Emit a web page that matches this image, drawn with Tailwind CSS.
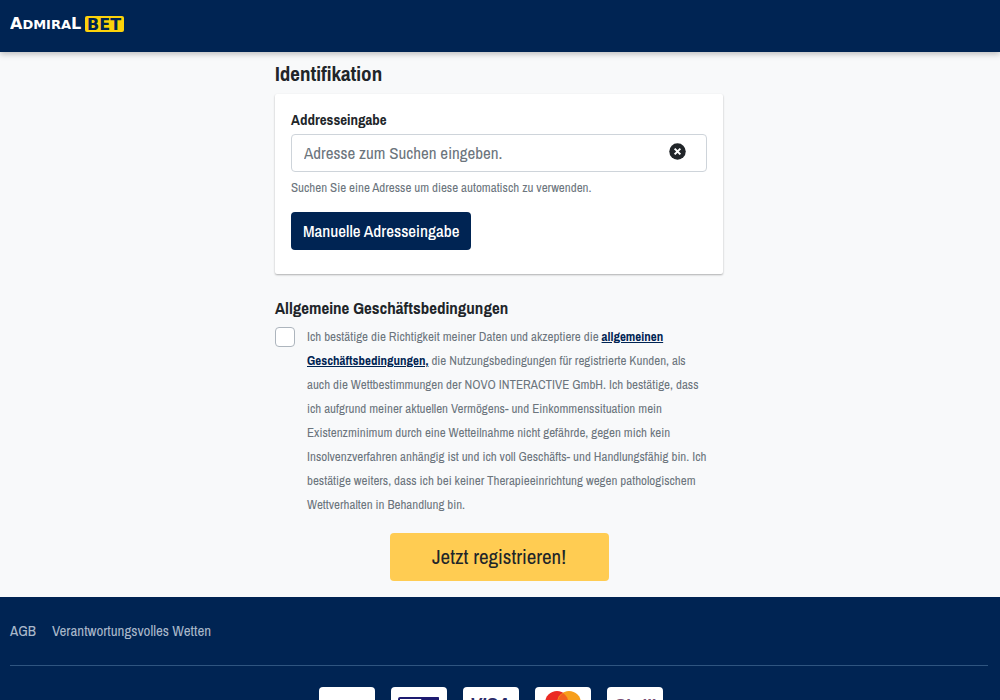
<!DOCTYPE html>
<html lang="de">
<head>
    <meta charset="UTF-8">
    <meta name="viewport" content="width=device-width, initial-scale=1.0">
    <title>AdmiralBet - Identifikation</title>
    <script src="https://cdn.jsdelivr.net/npm/@tailwindcss/browser@4"></script>
</head>
<body class="bg-[#f8f9fa] text-[#212529] font-['Archivo_Narrow','Liberation_Sans_Narrow','Liberation_Sans',sans-serif]">
    <header class="relative flex items-center h-[52px] px-2.5 pb-1 bg-[#002453] shadow-[0_2px_6px_rgba(0,0,0,0.25)]">
        <a href="#" aria-label="AdmiralBet">
            <svg width="114" height="18" viewBox="0 0 114 18" font-family="'DejaVu Sans', sans-serif" font-weight="bold">
                <text x="0" y="14" fill="#fff" font-size="16">A<tspan font-size="13">DMIRA</tspan><tspan font-size="16">L</tspan></text>
                <rect x="75" y="1" width="39" height="16" rx="2" fill="#fdd20a"/>
                <text x="77" y="15" fill="#002453" font-size="16">BET</text>
            </svg>
        </a>
    </header>

    <main class="pl-4 pr-[18px] pt-2 pb-4">
        <form class="w-full max-w-[448px] mx-auto">
            <h1 class="text-[21px] font-bold leading-7 mb-1.5">Identifikation</h1>

            <section class="bg-white rounded-xs px-4 pt-4 pb-6 shadow-[0_1px_2px_rgba(0,0,0,0.3)]">
                <label for="address" class="block text-[15px] font-bold leading-5 mb-1">Addresseingabe</label>
                <div class="flex items-center h-[38px] border border-[#ced4da] rounded pl-3 pr-5">
                    <input id="address" type="text" placeholder="Adresse zum Suchen eingeben."
                        class="flex-1 min-w-0 outline-none text-[17px] placeholder:text-[#6c757d]">
                    <button type="button" aria-label="Eingabe löschen" class="mb-1">
                        <svg width="17" height="17" viewBox="0 0 512 512">
                            <circle cx="256" cy="256" r="248" fill="#212529"/>
                            <path d="M170 170L342 342M342 170L170 342" stroke="#fff" stroke-width="62"/>
                        </svg>
                    </button>
                </div>
                <p class="mt-1 mb-3 text-[13px] leading-6 text-[#6c757d]">Suchen Sie eine Adresse um diese automatisch zu verwenden.</p>
                <button type="button" class="h-[38px] px-3 rounded bg-[#002453] text-white text-[17px] font-medium">Manuelle Adresseingabe</button>
            </section>

            <h2 class="mt-6 text-[17px] font-bold leading-5">Allgemeine Geschäftsbedingungen</h2>
            <div class="flex items-start gap-3 mt-[7px]">
                <input id="terms" type="checkbox" class="appearance-none shrink-0 w-5 h-5 mt-0.5 border border-[#adb5bd] rounded bg-white checked:bg-[#002453]">
                <label for="terms" class="text-[13px] leading-6 text-[#6c757d]">Ich bestätige die Richtigkeit meiner Daten und akzeptiere die <a href="#" class="font-bold text-[#002453] underline">allgemeinen<br>
                    Geschäftsbedingungen,</a> die Nutzungsbedingungen für registrierte Kunden, als<br>
                    auch die Wettbestimmungen der NOVO INTERACTIVE GmbH. Ich bestätige, dass<br>
                    ich aufgrund meiner aktuellen Vermögens- und Einkommenssituation mein<br>
                    Existenzminimum durch eine Wetteilnahme nicht gefährde, gegen mich kein<br>
                    Insolvenzverfahren anhängig ist und ich voll Geschäfts- und Handlungsfähig bin. Ich<br>
                    bestätige weiters, dass ich bei keiner Therapieeinrichtung wegen pathologischem<br>
                    Wettverhalten in Behandlung bin.</label>
            </div>

            <button type="submit" class="block w-[219px] h-12 mt-4 mx-auto rounded bg-[#ffcc52] text-[21px]">Jetzt registrieren!</button>
        </form>
    </main>

    <footer class="pl-2.5 pr-3 pt-6 pb-6 bg-[#002453]">
        <nav class="flex gap-4 pb-6 border-b border-[#2f5580] text-[15px] leading-5 text-[#a9b8ca]">
            <a href="#">AGB</a>
            <a href="#">Verantwortungsvolles Wetten</a>
        </nav>
        <div class="flex flex-wrap justify-center gap-4 mt-[21px] pr-4">
            <div class="w-14 h-9 rounded bg-white overflow-hidden">
                <svg width="56" height="36" viewBox="0 0 56 36" font-family="'Liberation Sans', sans-serif">
                    <text x="9" y="22" fill="#8fc7dc" font-size="13">paysafe</text>
                </svg>
            </div>
            <div class="w-14 h-9 rounded bg-white overflow-hidden">
                <svg width="56" height="36" viewBox="0 0 56 36" font-family="'Liberation Sans', sans-serif">
                    <rect x="8" y="11" width="39" height="18" rx="1" fill="#fff" stroke="#1d1b70" stroke-width="2"/>
                    <path d="M31 10H47Q48 10 48 11V30H25Z" fill="#1d1b70"/>
                    <text x="11" y="24" fill="#1d1b70" font-size="9">eps</text>
                </svg>
            </div>
            <div class="w-14 h-9 rounded bg-white overflow-hidden">
                <svg width="56" height="36" viewBox="0 0 56 36" font-family="'Liberation Sans', sans-serif">
                    <text x="7" y="23" fill="#2b2a68" font-size="17" font-weight="bold" font-style="italic">VISA</text>
                </svg>
            </div>
            <div class="w-14 h-9 rounded bg-white overflow-hidden">
                <svg width="56" height="36" viewBox="0 0 56 36">
                    <circle cx="22" cy="16" r="12" fill="#eb2a23"/>
                    <circle cx="34" cy="16" r="12" fill="#f79e1b"/>
                    <path d="M28 6A12 12 0 0 1 28 26A12 12 0 0 1 28 6Z" fill="#f2601f"/>
                </svg>
            </div>
            <div class="w-14 h-9 rounded bg-white overflow-hidden">
                <svg width="56" height="36" viewBox="0 0 56 36" font-family="'Liberation Sans', sans-serif">
                    <text x="8" y="24" fill="#7a4f74" font-size="17" font-weight="bold">Skrill</text>
                </svg>
            </div>
        </div>
    </footer>
</body>
</html>
